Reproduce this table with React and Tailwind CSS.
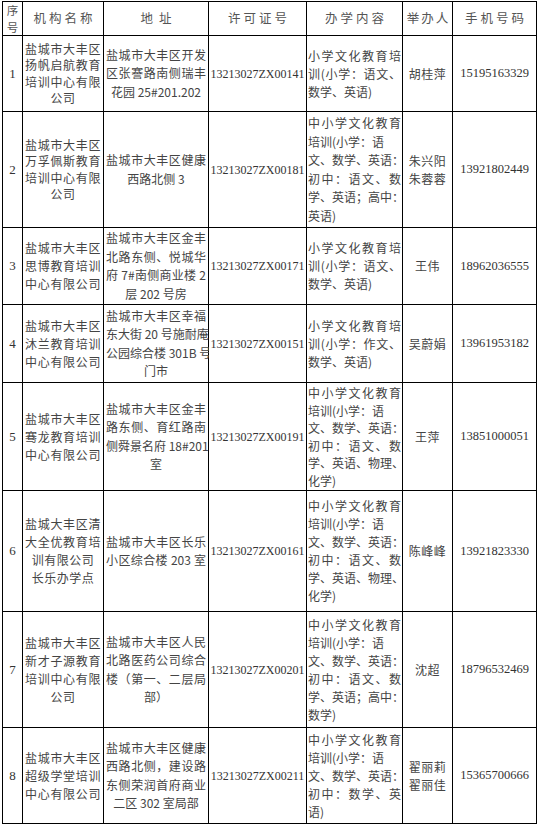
import React from "react";

const CJK = "font-['Noto_Sans_CJK_SC',sans-serif]";
const SERIF = "font-['Liberation_Serif',serif]";

// A line prefixed with "|" is not justified (centered or left-aligned).
const rows = [
  {
    no: "1",
    name: { lines: ["盐城市大丰区", "扬帆启航教育", "培训中心有限", "|公司"], lh: "leading-[16.5px]" },
    addr: { lines: ["盐城市大丰区开发", "区张謇路南侧瑞丰", "|花园 25#201.202"] },
    lic: "13213027ZX00141",
    content: { lines: ["小学文化教育培", "训(小学：语文、", "|数学、英语)"] },
    person: ["胡桂萍"],
    phone: "15195163329",
  },
  {
    no: "2",
    name: { lines: ["盐城市大丰区", "万孚佩斯教育", "培训中心有限", "|公司"], lh: "leading-[16.5px]" },
    addr: { lines: ["盐城市大丰区健康", "|西路北侧 3"] },
    lic: "13213027ZX00181",
    content: {
      lines: ["中小学文化教育", "|培训(小学：语", "文、数学、英语：", "初中：语文、数", "学、英语；高中：", "|英语)"],
      lh: "leading-[18.5px]",
    },
    person: ["朱兴阳", "朱蓉蓉"],
    phone: "13921802449",
  },
  {
    no: "3",
    name: { lines: ["盐城市大丰区", "思博教育培训", "中心有限公司"] },
    addr: { lines: ["盐城市大丰区金丰", "北路东侧、悦城华", "府 7#南侧商业楼 2", "|层 202 号房"] },
    lic: "13213027ZX00171",
    content: { lines: ["小学文化教育培", "训(小学：语文、", "|数学、英语)"] },
    person: ["王伟"],
    phone: "18962036555",
  },
  {
    no: "4",
    name: { lines: ["盐城市大丰区", "沐兰教育培训", "中心有限公司"] },
    addr: { lines: ["盐城市大丰区幸福", "东大街 20 号施耐庵", "公园综合楼 301B 号", "|门市"] },
    lic: "13213027ZX00151",
    content: { lines: ["小学文化教育培", "训(小学：作文、", "|数学、英语)"] },
    person: ["吴蔚娟"],
    phone: "13961953182",
  },
  {
    no: "5",
    name: { lines: ["盐城市大丰区", "骞龙教育培训", "中心有限公司"] },
    addr: { lines: ["盐城市大丰区金丰", "路东侧、育红路南", "侧舜景名府 18#201", "|室"] },
    lic: "13213027ZX00191",
    content: {
      lines: ["中小学文化教育", "|培训(小学：语", "文、数学、英语：", "初中：语文、数", "学、英语、物理、", "|化学)"],
      lh: "leading-[17.5px]",
    },
    person: ["王萍"],
    phone: "13851000051",
  },
  {
    no: "6",
    name: { lines: ["盐城大丰区清", "大全优教育培", "|训有限公司", "|长乐办学点"] },
    addr: { lines: ["盐城市大丰区长乐", "小区综合楼 203 室"] },
    lic: "13213027ZX00161",
    content: {
      lines: ["中小学文化教育", "|培训(小学：语", "文、数学、英语：", "初中：语文、数", "学、英语、物理、", "|化学)"],
    },
    person: ["陈峰峰"],
    phone: "13921823330",
  },
  {
    no: "7",
    name: { lines: ["盐城市大丰区", "新才子源教育", "培训中心有限", "|公司"] },
    addr: { lines: ["盐城市大丰区人民", "北路医药公司综合", "楼（第一、二层局", "|部）"] },
    lic: "13213027ZX00201",
    content: {
      lines: ["中小学文化教育", "|培训(小学：语", "文、数学、英语：", "初中：语文、数", "学、英语；高中：", "|数学)"],
    },
    person: ["沈超"],
    phone: "18796532469",
  },
  {
    no: "8",
    name: { lines: ["盐城市大丰区", "超级学堂培训", "中心有限公司"] },
    addr: { lines: ["盐城市大丰区健康", "西路北侧，建设路", "东侧荣润首府商业", "|二区 302 室局部"] },
    lic: "13213027ZX00211",
    content: { lines: ["中小学文化教育", "|培训(小学：语", "文、数学、英语：", "初中：数学、英", "|语)"] },
    person: ["翟丽莉", "翟丽佳"],
    phone: "15365700666",
  },
];

function Lines({ lines, align, lh }) {
  return (
    <div className={`${lh || "leading-[18px]"}`}>
      {lines.map((raw, i) => {
        const plain = raw.startsWith("|");
        const l = plain ? raw.slice(1) : raw;
        return (
          <div
            key={i}
            className={
              !plain
                ? "text-justify [text-align-last:justify] whitespace-nowrap"
                : align === "center"
                ? "text-center whitespace-nowrap"
                : "text-left whitespace-nowrap"
            }
          >
            {l}
          </div>
        );
      })}
    </div>
  );
}

const cell = "bg-white flex flex-col justify-center overflow-visible";
const head = "bg-white flex items-center justify-center text-[12.5px] text-[#555]";

export default function App() {
  return (
    <div className="bg-white w-[539px] h-[825px] pt-px pl-[2px]">
      <div
        className={`grid w-fit bg-black p-px gap-px grid-cols-[19px_80px_104px_97px_95px_49px_83px] grid-rows-[33px_75px_115px_76px_77px_107px_120px_115px_95px] ${CJK} text-[12px] text-[#444]`}
      >
        {/* header */}
        <div className="bg-white flex items-center justify-center text-[11.5px] leading-[16.5px] text-[#555] text-center">
          序<br />号
        </div>
        <div className={`${head} tracking-[3px] pl-[3px]`}>机构名称</div>
        <div className={`${head} tracking-[6px] pl-[6px]`}>地址</div>
        <div className={`${head} tracking-[3px] pl-[3px]`}>许可证号</div>
        <div className={`${head} tracking-[3px] pl-[3px]`}>办学内容</div>
        <div className={`${head} tracking-[2px] pl-[2px]`}>举办人</div>
        <div className={`${head} tracking-[3px] pl-[3px]`}>手机号码</div>

        {rows.map((r) => (
          <React.Fragment key={r.no}>
            <div className={`${cell} items-center ${SERIF} text-[13px] text-[#333]`}>{r.no}</div>
            <div className={`${cell} px-[2px] tracking-[0.5px]`}>
              <Lines lines={r.name.lines} align="center" lh={r.name.lh} />
            </div>
            <div className={`${cell} px-[2px]`}>
              <Lines lines={r.addr.lines} align="center" lh="leading-[18.5px]" />
            </div>
            <div className={`${cell} items-center ${SERIF} text-[12px] text-[#333]`}>{r.lic}</div>
            <div className={`${cell} px-px`}>
              <Lines lines={r.content.lines} align="left" lh={r.content.lh} />
            </div>
            <div className={`${cell} items-center leading-[18px] tracking-[0.5px]`}>
              {r.person.map((p) => (
                <span key={p}>{p}</span>
              ))}
            </div>
            <div className={`${cell} items-center ${SERIF} text-[12.5px] text-[#333]`}>{r.phone}</div>
          </React.Fragment>
        ))}
      </div>
    </div>
  );
}
